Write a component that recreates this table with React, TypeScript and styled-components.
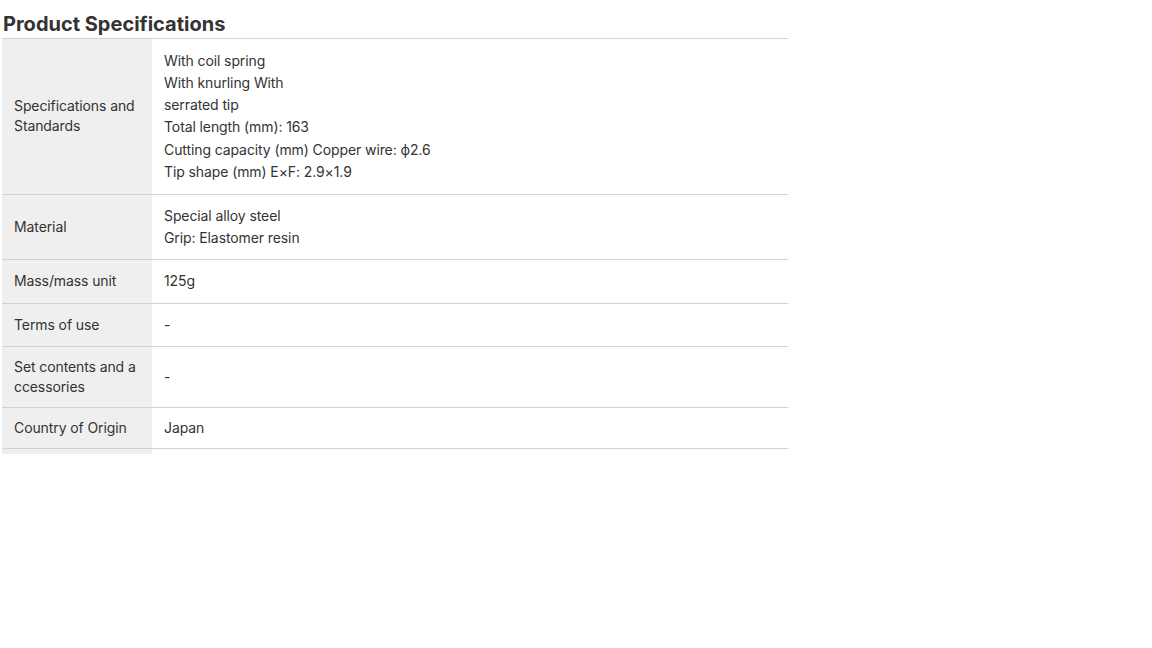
import React from "react";
import styled, { createGlobalStyle } from "styled-components";

const Global = createGlobalStyle`
  html, body { margin: 0; padding: 0; background: #fff; }
  body { font-family: Inter, "Noto Sans", "Liberation Sans", sans-serif; color: #333; }
`;

const Page = styled.div`
  padding: 10px 0 0 2px;
  width: 786px;
`;

const Title = styled.h2`
  margin: 0 0 0 1px;
  font-size: 20px;
  line-height: 28px;
  font-weight: 700;
  color: #333;
`;

const Table = styled.div`
  border-top: 1px solid #d2d2d2;
  padding-bottom: 5px;
  background: linear-gradient(to right, #efefef 150px, #fff 150px);
`;

const Row = styled.div`
  display: grid;
  grid-template-columns: 150px 1fr;
  border-bottom: 1px solid #d2d2d2;
`;

const Label = styled.div`
  padding: 10px 12px;
  font-size: 14px;
  line-height: 20px;
  color: #333;
  background: #efefef;
  display: flex;
  flex-direction: column;
  justify-content: center;
  letter-spacing: -0.1px;
`;

const Value = styled.div<{ $lh: number }>`
  padding: 10.5px 12px;
  font-size: 14px;
  line-height: ${(p) => p.$lh}px;
  color: #333;
  background: #fff;
  display: flex;
  flex-direction: column;
  justify-content: center;
  letter-spacing: -0.1px;
`;

const rows: { label: string[]; value: string[]; lh: number }[] = [
  {
    label: ["Specifications and", "Standards"],
    value: [
      "With coil spring",
      "With knurling With",
      "serrated tip",
      "Total length (mm): 163",
      "Cutting capacity (mm) Copper wire: \u03d52.6",
      "Tip shape (mm) E\u00d7F: 2.9\u00d71.9",
    ],
    lh: 22.3,
  },
  { label: ["Material"], value: ["Special alloy steel", "Grip: Elastomer resin"], lh: 21.5 },
  { label: ["Mass/mass unit"], value: ["125g"], lh: 22 },
  { label: ["Terms of use"], value: ["-"], lh: 21 },
  { label: ["Set contents and a", "ccessories"], value: ["-"], lh: 20 },
  { label: ["Country of Origin"], value: ["Japan"], lh: 19 },
];

export default function App() {
  return (
    <Page>
      <Global />
      <Title>Product Specifications</Title>
      <Table>
        {rows.map((r, i) => (
          <Row key={i}>
            <Label>
              {r.label.map((l, j) => (
                <span key={j}>{l}</span>
              ))}
            </Label>
            <Value $lh={r.lh}>
              {r.value.map((v, j) => (
                <span key={j}>{v}</span>
              ))}
            </Value>
          </Row>
        ))}
      </Table>
    </Page>
  );
}
